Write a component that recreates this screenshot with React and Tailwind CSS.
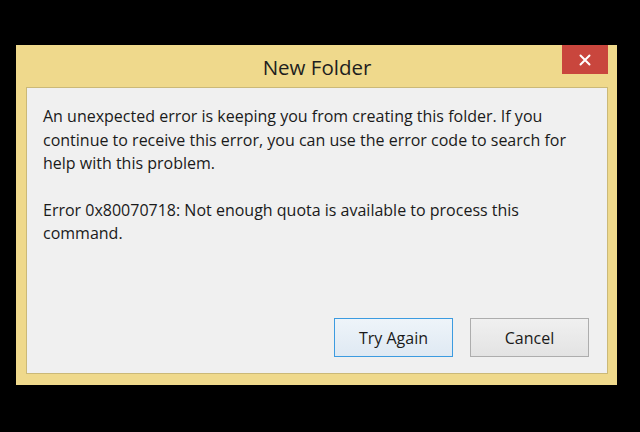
import React from 'react';

export default function App() {
    return (
        <div className="w-[640px] h-[432px] bg-black flex items-start pt-[45px] pl-[16px]" style={{ fontFamily: '"Open Sans", "Noto Sans", sans-serif' }}>
            {/* window frame */}
            <div className="w-[601px] h-[340px] bg-[#efd98c] flex flex-col px-[10px] pb-[11px] pr-[9px]">
                {/* title bar */}
                <div className="h-[42px] flex items-start relative">
                    <div className="flex-1 text-center text-[20.5px] text-[#1e1e1e] pt-[9px] leading-[26px]">New Folder</div>
                    <button className="absolute right-0 top-0 w-[46px] h-[29px] bg-[#c9463d] flex items-center justify-center">
                        <svg width="12" height="12" viewBox="0 0 12 12">
                            <path d="M1.5 1.5 L10.5 10.5 M10.5 1.5 L1.5 10.5" stroke="#fff" strokeWidth="2" strokeLinecap="round" />
                        </svg>
                    </button>
                </div>
                {/* content */}
                <div className="flex-1 bg-[#f0f0f0] border border-[#cbb978] flex flex-col pl-[16px] pr-[18px] pt-[17px] pb-[16px]">
                    <p className="w-[530px] text-[16px] leading-[23.5px] text-[#1a1a1a]">
                        An unexpected error is keeping you from creating this folder. If you continue to receive this error, you can use the error code to search for help with this problem.
                    </p>
                    <p className="w-[530px] text-[16px] leading-[23.5px] text-[#1a1a1a] mt-[23px]">
                        Error 0x80070718: Not enough quota is available to process this command.
                    </p>
                    <div className="mt-auto flex justify-end gap-[17px]">
                        <button className="w-[119px] h-[39px] border border-[#3c9be0] bg-gradient-to-b from-[#eef4f9] to-[#dfe9f3] text-[16px] text-[#1a1a1a]">Try Again</button>
                        <button className="w-[119px] h-[39px] border border-[#adadad] bg-gradient-to-b from-[#f0f0f0] to-[#e3e3e3] text-[16px] text-[#1a1a1a]">Cancel</button>
                    </div>
                </div>
            </div>
        </div>
    );
}
